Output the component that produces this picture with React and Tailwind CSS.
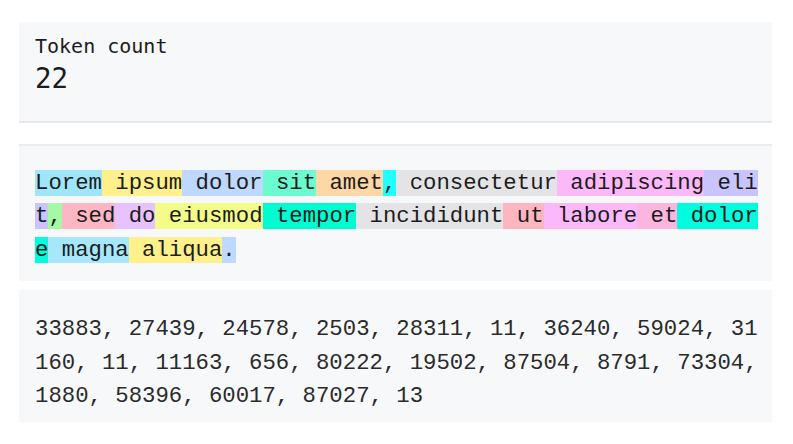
import React from 'react'

const TOKENS = [
  ['Lorem', '#a0e6fb'],
  [' ipsum', '#fef08a'],
  [' dolor', '#bfd8fd'],
  [' sit', '#6cfbd0'],
  [' amet', '#fed7a6'],
  [',', '#22fdfd'],
  [' consectetur', '#e4e4e7'],
  [' adipiscing', '#fcb9fa'],
  [' elit', '#c9c4fc'],
  [',', '#a6f9a4'],
  [' sed', '#fdb6c6'],
  [' do', '#e8c2fc'],
  [' eiusmod', '#f3fc89'],
  [' tempor', '#00fdd1'],
  [' incididunt', '#e4e4e7'],
  [' ut', '#fdb5c0'],
  [' labore', '#fcb9fa'],
  [' et', '#fbb6e0'],
  [' dolore', '#00fdde'],
  [' magna', '#a6e7fc'],
  [' aliqua', '#fef08a'],
  ['.', '#bfd8fd'],
]

const IDS = [
  33883, 27439, 24578, 2503, 28311, 11, 36240, 59024, 31160, 11, 11163,
  656, 80222, 19502, 87504, 8791, 73304, 1880, 58396, 60017, 87027, 13,
]

export default function App() {
  return (
    <div className="w-[793px] h-[444px] bg-white overflow-hidden">
      <div className="ml-[19px] w-[753px] pt-[22px]">
        {/* count */}
        <div className="bg-[#f7f8fa] border-b-2 border-[#e7e7ed] px-4 pt-[10px] pb-[25px] text-[#1c1c1c]" style={{ fontFamily: '"DejaVu Sans Mono", monospace' }}>
          <div className="text-[20px] leading-[28px]">Token count</div>
          <div className="text-[27.5px] leading-[36px]">22</div>
        </div>

        <div className="h-[21px]" />

        {/* highlighted text */}
        <div
          className="bg-[#f7f8fa] border-t-2 border-[#ececf0] pl-4 pr-3 pt-[21px] pb-[14px] text-[22.3px] leading-[1.5] text-[#1c1c1c] break-all"
          style={{ fontFamily: '"Liberation Mono", monospace' }}
        >
          {TOKENS.map(([t, c], i) => (
            <span key={i} className="whitespace-pre-wrap" style={{ background: c }}>{t}</span>
          ))}
        </div>

        {/* token ids */}
        <div
          className="mt-[9px] bg-[#f7f8fa] pl-4 pr-3 pt-[23px] pb-[8px] text-[22.3px] leading-[1.5] text-[#2a2a2a] break-all"
          style={{ fontFamily: '"Liberation Mono", monospace' }}
        >
          {IDS.join(', ')}
        </div>
      </div>
    </div>
  )
}
